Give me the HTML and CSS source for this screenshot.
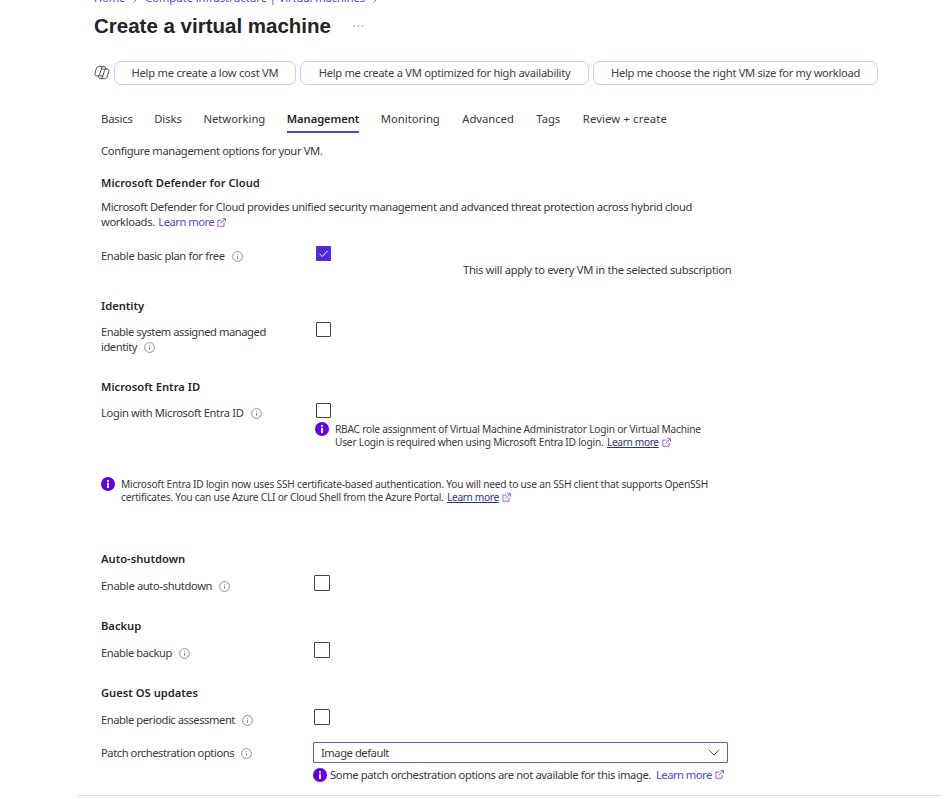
FILE: index.html
```
<!DOCTYPE html>
<html lang="en">
<head>
<meta charset="utf-8">
<title>Create a virtual machine</title>
<link rel="stylesheet" href="styles.css">
</head>
<body>
<svg class="defs" width="0" height="0" aria-hidden="true">
  <symbol id="info" viewBox="0 0 11 11"><circle cx="5.5" cy="5.5" r="4.9" fill="none" stroke="#777" stroke-width=".8"/><path d="M5.5 4.8v3.1M5.5 2.9v1" stroke="#888" stroke-width=".9"/></symbol>
  <symbol id="badge" viewBox="0 0 14 14"><circle cx="7" cy="7" r="7" fill="#6400e6"/><path d="M7 5.8v5.2M7 2.9v1.9" stroke="#fff" stroke-width="1.9"/></symbol>
  <symbol id="ext" viewBox="0 0 10 10"><path d="M5 2.3H1v6.9h6.8V5.4M4 6l5-5M6 .7h3.4V4" fill="none" stroke="#9333ea" stroke-width=".9"/></symbol>
</svg>
<div class="page">
  <nav class="breadcrumb">
    <a>Home</a><svg class="crumb" viewBox="0 0 5 8"><path d="M.7.7 4 4 .7 7.3"/></svg>
    <a>Compute infrastructure | Virtual machines</a><svg class="crumb" viewBox="0 0 5 8"><path d="M.7.7 4 4 .7 7.3"/></svg>
  </nav>
  <header class="title"><h1>Create a virtual machine</h1><svg class="dots" viewBox="0 0 11 2"><path d="M.5 1h1.2M4.8 1H6M9.1 1h1.2"/></svg></header>
  <div class="prompts">
    <svg class="copilot" viewBox="0 0 15 14"><path d="M5.100 1.200h4c1 0 1.400.5 1.700 1.400l.4 1.200h1.300c1.200 0 1.800.9 1.400 2.100l-1.400 4.700c-.4 1.400-1.100 2.200-2.400 2.200h-4c-1 0-1.500-.5-1.800-1.500l-.3-1.100H2.400c-1.300 0-1.900-.9-1.500-2.200l1.300-4.500c.4-1.500 1.300-2.300 2.900-2.300zM8.600 1.200c-.8.1-1.200.7-1.500 1.600L5.300 8.700c-.3 1-.7 1.500-1.500 1.500M6.400 12.800c.9-.1 1.300-.7 1.600-1.600l1.800-5.900c.3-1 .7-1.500 1.500-1.500M7 3.800h4.200M4 10.200h4.200"/></svg>
    <button class="p1">Help me create a low cost VM</button>
    <button class="p2">Help me create a VM optimized for high availability</button>
    <button class="p3">Help me choose the right VM size for my workload</button>
  </div>
  <div class="tabs">
    <span class="basics">Basics</span><span>Disks</span><span>Networking</span><span class="active">Management</span><span>Monitoring</span><span class="later">Advanced</span><span class="later">Tags</span><span class="review">Review + create</span>
  </div>
  <main>
    <p class="intro">Configure management options for your VM.</p>

    <section class="defender">
      <h2>Microsoft Defender for Cloud</h2>
      <p class="desc">Microsoft Defender for Cloud provides unified security management and advanced threat protection across hybrid cloud<br>workloads. <a class="link">Learn more</a><svg class="ext"><use href="#ext"/></svg></p>
      <div class="row">
        <label>Enable basic plan for free<svg class="info"><use href="#info"/></svg></label>
        <span class="check on"><svg viewBox="0 0 15 15"><path d="M3.6 7.8l2.700 2.700 5.400-5.700"/></svg></span>
        <span class="hint">This will apply to every VM in the selected subscription</span>
      </div>
    </section>

    <section class="identity">
      <h2>Identity</h2>
      <div class="row">
        <label class="tight">Enable system assigned managed<br>identity<svg class="info"><use href="#info"/></svg></label>
        <span class="check"></span>
      </div>
    </section>

    <section class="entra">
      <h2>Microsoft Entra ID</h2>
      <div class="row">
        <label>Login with Microsoft Entra ID<svg class="info"><use href="#info"/></svg></label>
        <div>
          <span class="check"></span>
          <div class="note"><svg class="badge"><use href="#badge"/></svg><p>RBAC role assignment of Virtual Machine Administrator Login or Virtual Machine<br>User Login is required when using Microsoft Entra ID login. <a>Learn more</a><svg class="ext"><use href="#ext"/></svg></p></div>
        </div>
      </div>
      <div class="note ssh"><svg class="badge"><use href="#badge"/></svg><p>Microsoft Entra ID login now uses SSH certificate-based authentication. You will need to use an SSH client that supports OpenSSH<br>certificates. You can use Azure CLI or Cloud Shell from the Azure Portal. <a>Learn more</a><svg class="ext"><use href="#ext"/></svg></p></div>
    </section>

    <section class="narrow">
      <h2>Auto-shutdown</h2>
      <div class="row">
        <label>Enable auto-shutdown<svg class="info"><use href="#info"/></svg></label>
        <span class="check"></span>
      </div>
    </section>

    <section class="narrow">
      <h2>Backup</h2>
      <div class="row">
        <label class="tight">Enable backup<svg class="info"><use href="#info"/></svg></label>
        <span class="check"></span>
      </div>
    </section>

    <section class="narrow guest">
      <h2>Guest OS updates</h2>
      <div class="row">
        <label class="tight">Enable periodic assessment<svg class="info"><use href="#info"/></svg></label>
        <span class="check"></span>
      </div>
      <div class="row patch">
        <label class="tight">Patch orchestration options<svg class="info"><use href="#info"/></svg></label>
        <div>
          <div class="select"><span>Image default</span><svg viewBox="0 0 12 7"><path d="M.8.8 6 6 11.200.8"/></svg></div>
          <div class="warn"><svg class="badge"><use href="#badge"/></svg><span>Some patch orchestration options are not available for this image.</span><a class="link">Learn more</a><svg class="ext"><use href="#ext"/></svg></div>
        </div>
      </div>
    </section>
  </main>
</div>
</body>
</html>
```
FILE: styles.css
```
* { box-sizing: border-box; margin: 0; padding: 0; }
body {
  background: #fff; color: #3b3a39; overflow: hidden;
  font: 11.2px/15px "Noto Sans", "Open Sans", sans-serif; letter-spacing: -.355px;
}
svg { flex: none; }
.defs { position: absolute; }
.page { margin-left: 78px; width: 863px; height: 796px; border-bottom: 1px solid #dcdcdc; }

.breadcrumb { display: flex; align-items: flex-end; height: 6px; padding-left: 16px; font-size: 11px; line-height: 16px; letter-spacing: 0; color: #4f46e5; }
.crumb { width: 5px; height: 8px; margin: 0 7px 3px 8px; fill: none; stroke: #666; stroke-width: .9; }

.title { display: flex; align-items: center; height: 30px; margin-top: 5px; padding-left: 16px; }
h1 { font: bold 20.5px/30px "Liberation Sans", Arial, sans-serif; letter-spacing: 0; color: #242424; }
.dots { width: 11px; height: 2px; margin-left: 22px; stroke: #555; stroke-width: 1.1; }

.prompts { display: flex; align-items: center; height: 24px; margin-top: 20px; padding-left: 16px; }
.copilot { width: 16px; height: 15px; margin: 0 4px 1px 0; fill: none; stroke: #444; stroke-width: .9; }
.prompts button {
  height: 24px; margin-right: 4px; padding-bottom: 2px; background: #fff; color: #424242; border: 1px solid #c0cffc; border-radius: 7px;
  font: inherit; letter-spacing: -.3px; white-space: nowrap;
}
.prompts .p1 { width: 182px; letter-spacing: -.26px; }
.prompts .p2 { width: 289px; }
.prompts .p3 { width: 285px; letter-spacing: -.32px; }

.tabs { display: flex; height: 25px; margin-top: 23px; padding-left: 23px; gap: 21.5px; font-size: 11.3px; line-height: 21px; letter-spacing: -.05px; white-space: nowrap; }
.tabs .basics { letter-spacing: -.2px; }
.active { border-bottom: 2px solid #4f46d8; font-weight: 600; font-size: 11.2px; color: #242424; }
.tabs .later { margin-left: 1px; }
.tabs .review { margin-left: 1px; letter-spacing: .13px; }

main { padding: 10px 0 0 23px; }
h2 { font-size: 11.2px; font-weight: 600; line-height: 15px; letter-spacing: 0; color: #292827; }
.link { color: #4f46e5; letter-spacing: -.5px; }
.ext { width: 9px; height: 9px; margin-left: 3px; vertical-align: -1px; }
.info { width: 11px; height: 11px; margin-left: 7px; vertical-align: -2px; }
.row { display: grid; grid-template-columns: 215px 147px 1fr; align-items: start; }
.row label { padding-top: 3px; letter-spacing: -.36px; white-space: nowrap; }
.row .tight { letter-spacing: -.45px; }
.check { display: block; width: 15px; height: 15px; margin-top: 1px; border: 1px solid #444; border-radius: 1px; }
.check.on { border: 0; background: #4f2bdb; }
.check svg { display: block; fill: none; stroke: #fff; stroke-width: 1; }

.defender { margin-top: 17px; height: 123px; }
.desc { margin-top: 9px; }
.desc .link { margin-left: 1px; }
.defender .row { margin-top: 16px; }
.hint { padding-top: 17px; white-space: nowrap; letter-spacing: -.3px; }

.identity { height: 81px; }
.identity .row, .entra .row { margin-top: 8px; }

.entra { height: 172px; }
.note { display: flex; font-size: 10.2px; line-height: 13px; letter-spacing: -.23px; white-space: nowrap; }
.note a { color: #2a3580; text-decoration: underline; margin-left: 1px; letter-spacing: -.36px; }
.note .ext { width: 9px; height: 9px; }
.badge { width: 14px; height: 14px; }
.row .note { margin: 5px 0 0 -1px; }
.row .note .badge { margin-top: -1px; }
.note p { margin-left: 6px; }
.ssh { margin-top: 29px; }
.ssh .badge { margin-top: -1px; }

.narrow { height: 67px; }
.narrow .row { grid-template-columns: 213px 1fr; margin-top: 9px; }
.narrow .row .check { width: 16px; height: 16px; margin-top: 0; }
.narrow .patch { margin-top: 15px; grid-template-columns: 212px 1fr; }
.select { display: flex; align-items: center; justify-content: space-between; width: 415px; height: 21px; padding: 0 7px; border: 1px solid #6258e0; border-radius: 1px; letter-spacing: -.45px; }
.select svg { width: 12px; height: 7px; fill: none; stroke: #555; stroke-width: 1; }
.warn { display: flex; align-items: center; height: 15px; margin-top: 4px; letter-spacing: -.39px; white-space: nowrap; }
.warn span { margin-left: 3px; }
.warn .link { margin-left: 5px; }
```
